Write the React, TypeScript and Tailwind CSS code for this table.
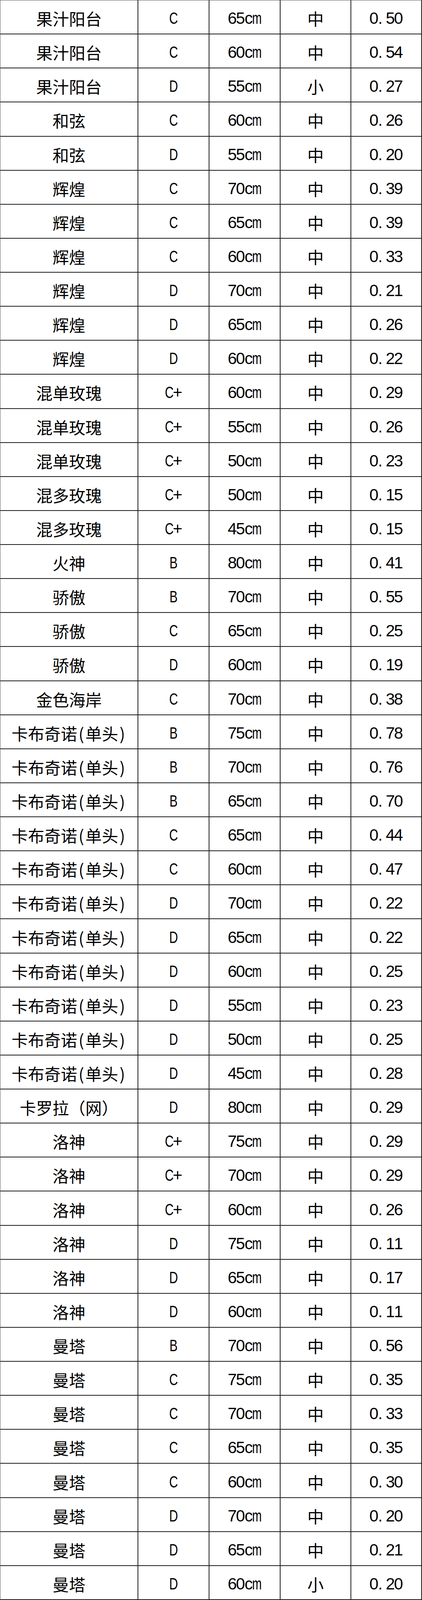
import React from "react";

type Row = [string, string, string, string, string];

const rows: Row[] = [
  ["果汁阳台", "C", "65cm", "中", "0.50"],
  ["果汁阳台", "C", "60cm", "中", "0.54"],
  ["果汁阳台", "D", "55cm", "小", "0.27"],
  ["和弦", "C", "60cm", "中", "0.26"],
  ["和弦", "D", "55cm", "中", "0.20"],
  ["辉煌", "C", "70cm", "中", "0.39"],
  ["辉煌", "C", "65cm", "中", "0.39"],
  ["辉煌", "C", "60cm", "中", "0.33"],
  ["辉煌", "D", "70cm", "中", "0.21"],
  ["辉煌", "D", "65cm", "中", "0.26"],
  ["辉煌", "D", "60cm", "中", "0.22"],
  ["混单玫瑰", "C+", "60cm", "中", "0.29"],
  ["混单玫瑰", "C+", "55cm", "中", "0.26"],
  ["混单玫瑰", "C+", "50cm", "中", "0.23"],
  ["混多玫瑰", "C+", "50cm", "中", "0.15"],
  ["混多玫瑰", "C+", "45cm", "中", "0.15"],
  ["火神", "B", "80cm", "中", "0.41"],
  ["骄傲", "B", "70cm", "中", "0.55"],
  ["骄傲", "C", "65cm", "中", "0.25"],
  ["骄傲", "D", "60cm", "中", "0.19"],
  ["金色海岸", "C", "70cm", "中", "0.38"],
  ["卡布奇诺(单头)", "B", "75cm", "中", "0.78"],
  ["卡布奇诺(单头)", "B", "70cm", "中", "0.76"],
  ["卡布奇诺(单头)", "B", "65cm", "中", "0.70"],
  ["卡布奇诺(单头)", "C", "65cm", "中", "0.44"],
  ["卡布奇诺(单头)", "C", "60cm", "中", "0.47"],
  ["卡布奇诺(单头)", "D", "70cm", "中", "0.22"],
  ["卡布奇诺(单头)", "D", "65cm", "中", "0.22"],
  ["卡布奇诺(单头)", "D", "60cm", "中", "0.25"],
  ["卡布奇诺(单头)", "D", "55cm", "中", "0.23"],
  ["卡布奇诺(单头)", "D", "50cm", "中", "0.25"],
  ["卡布奇诺(单头)", "D", "45cm", "中", "0.28"],
  ["卡罗拉（网）", "D", "80cm", "中", "0.29"],
  ["洛神", "C+", "75cm", "中", "0.29"],
  ["洛神", "C+", "70cm", "中", "0.29"],
  ["洛神", "C+", "60cm", "中", "0.26"],
  ["洛神", "D", "75cm", "中", "0.11"],
  ["洛神", "D", "65cm", "中", "0.17"],
  ["洛神", "D", "60cm", "中", "0.11"],
  ["曼塔", "B", "70cm", "中", "0.56"],
  ["曼塔", "C", "75cm", "中", "0.35"],
  ["曼塔", "C", "70cm", "中", "0.33"],
  ["曼塔", "C", "65cm", "中", "0.35"],
  ["曼塔", "C", "60cm", "中", "0.30"],
  ["曼塔", "D", "70cm", "中", "0.20"],
  ["曼塔", "D", "65cm", "中", "0.21"],
  ["曼塔", "D", "60cm", "小", "0.20"],
];

function glyphScale(ch: string): string {
  if (ch === "m") return "inline-block scale-x-[0.7]";
  if (ch === "B" || ch === "C" || ch === "D") return "inline-block scale-x-[0.74]";
  return "inline-block";
}

function Latin({ text }: { text: string }) {
  return (
    <span className="inline-flex font-['Liberation_Sans',Arial,sans-serif] text-[42px] leading-none">
      {Array.from(text).map((ch, i) => (
        <span
          key={i}
          className={
            ch === "."
              ? "inline-flex w-[21px] justify-start"
              : "inline-flex w-[21px] justify-center"
          }
        >
          <span className={glyphScale(ch)}>{ch}</span>
        </span>
      ))}
    </span>
  );
}

function Cjk({ text }: { text: string }) {
  return (
    <span className="inline-flex font-['Noto_Sans_CJK_SC','Noto_Sans_CJK_JP',sans-serif] text-[42px] leading-none">
      {Array.from(text).map((ch, i) =>
        ch === "(" || ch === ")" ? (
          <span key={i} className="inline-flex w-[21px] justify-center">
            {ch}
          </span>
        ) : (
          <span key={i} className="inline-block">
            {ch}
          </span>
        )
      )}
    </span>
  );
}

const cellCls =
  "flex items-center justify-center pt-[7px] border-r-2 border-b-2 border-[#1c1c1c] overflow-hidden text-black";

export default function App() {
  return (
    <div className="w-[1080px] h-screen overflow-hidden bg-white">
      <div className="grid h-full w-[1080px] grid-cols-[353px_182px_182px_181px_181px] grid-rows-[repeat(47,minmax(0,1fr))] border-t border-l border-[#555555]">
        {rows.map((r, i) => (
          <React.Fragment key={i}>
            <div className={cellCls}>
              <Cjk text={r[0]} />
            </div>
            <div className={cellCls}>
              <Latin text={r[1]} />
            </div>
            <div className={cellCls}>
              <Latin text={r[2]} />
            </div>
            <div className={cellCls}>
              <Cjk text={r[3]} />
            </div>
            <div className={cellCls}>
              <Latin text={r[4]} />
            </div>
          </React.Fragment>
        ))}
      </div>
    </div>
  );
}
